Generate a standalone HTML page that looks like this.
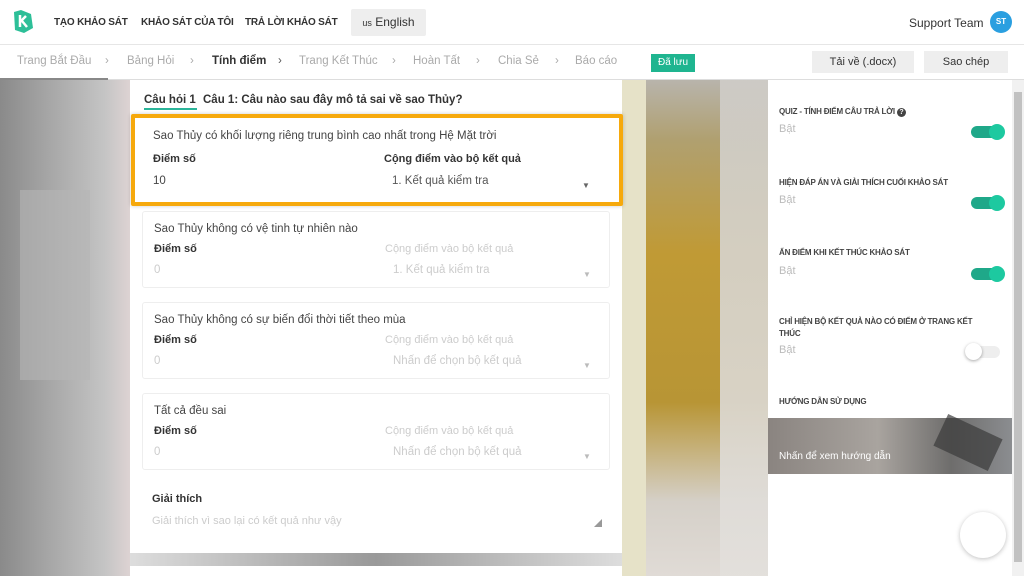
<!DOCTYPE html>
<html><head><meta charset="utf-8"><style>
*{box-sizing:border-box;margin:0;padding:0}
body{width:1024px;height:576px;overflow:hidden;font-family:"Liberation Sans","Noto Sans CJK SC",sans-serif;background:#fff;position:relative;color:#333}
.top{position:absolute;left:0;top:0;width:1024px;height:45px;background:#fff;border-bottom:1px solid #e6e6e6}
.nav{position:absolute;top:17px;font-size:10px;font-weight:bold;color:#333;letter-spacing:-0.2px}
.crumbs{position:absolute;left:0;top:45px;width:1024px;height:35px;background:#fff;border-bottom:1px solid #ddd}
.cr{position:absolute;top:10px;font-size:11.5px;color:#aaa}
.btn{position:absolute;top:6px;height:22px;background:#eee;font-size:11px;color:#333;text-align:center;line-height:22px}
.bg{position:absolute;top:80px;height:496px}
.card{position:absolute;left:130px;top:80px;width:492px;height:473px;background:#fff;border-radius:3px}
.opt{position:absolute;left:142px;width:468px;height:77px;border:1px solid #eee;border-radius:3px;background:#fff}
.opt .t{position:absolute;left:11px;top:11px;font-size:11.5px;color:#444}
.opt .l1{position:absolute;left:11px;top:31px;font-size:11px;font-weight:bold;color:#333}
.opt .l2{position:absolute;left:242px;top:31px;font-size:11px;color:#ccc}
.opt .v1{position:absolute;left:11px;top:52px;font-size:11.5px;color:#ccc}
.opt .v2{position:absolute;left:250px;top:52px;font-size:11.5px;color:#ccc}
.opt .ar{position:absolute;left:440px;top:58px;font-size:8px;color:#bbb}
.rp{position:absolute;left:768px;top:80px;width:244px;height:496px;background:#fff}
.rh{position:absolute;left:11px;font-size:8px;font-weight:bold;color:#444;line-height:12px;letter-spacing:-0.2px}
.rb{position:absolute;left:11px;font-size:11px;color:#bbb}
.tg{position:absolute;left:203px;width:32px;height:12px;border-radius:6px;background:#1fa889}
.tg::after{content:"";position:absolute;right:-2px;top:-2px;width:16px;height:16px;border-radius:50%;background:#1dc9a0}
</style></head><body>
<div class="bg" style="left:0;width:130px;background:linear-gradient(90deg,#8a8a8a 0%,#a8a8a8 40%,#c4c4c4 80%,#ddd3d3 100%)"></div>
<div class="bg" style="left:20px;top:190px;width:70px;height:190px;background:#b5b5b5;opacity:.6"></div>
<div class="bg" style="left:622px;width:146px;background:linear-gradient(180deg,#b8b4ac 0%,#b0a070 12%,#c09a35 35%,#b89535 65%,#d5d0c8 85%,#e0dbd6 100%)"></div>
<div class="bg" style="left:622px;width:24px;background:#e6e2c8"></div>
<div class="bg" style="left:720px;top:80px;width:48px;height:496px;background:linear-gradient(180deg,#cfcdc8,#e3e0dc);opacity:.9"></div>
<div class="bg" style="left:130px;top:553px;width:492px;height:23px;background:linear-gradient(90deg,#ddd,#999,#ddd)"></div>
<div style="position:absolute;left:130px;top:566px;width:492px;height:10px;background:#fff"></div>

<div class="top">
<svg style="position:absolute;left:12px;top:10px" width="21" height="23" viewBox="0 0 21 23"><path d="M2 2 L9 0 L19 4 L21 18 L12 23 L3 20 Z" fill="#2dbf98"/><path d="M8 5 V17 M8 12 L14 6 M10 11 L15 17" stroke="#fff" stroke-width="2.5" fill="none"/></svg>
<div class="nav" style="left:54px">TẠO KHẢO SÁT</div>
<div class="nav" style="left:141px">KHẢO SÁT CỦA TÔI</div>
<div class="nav" style="left:245px">TRẢ LỜI KHẢO SÁT</div>
<div style="position:absolute;left:351px;top:9px;width:75px;height:27px;background:#eee;border-radius:2px;font-size:12px;line-height:27px;text-align:center;color:#333"><span style="font-size:9px">us</span> English</div>
<div style="position:absolute;left:909px;top:16px;font-size:12px;color:#333">Support Team</div>
<div style="position:absolute;left:990px;top:11px;width:22px;height:22px;border-radius:50%;background:#2a9fe0;color:#fff;font-size:8px;font-weight:bold;text-align:center;line-height:22px">ST</div>
</div>
<div class="crumbs">
<div class="cr" style="left:17px">Trang Bắt Đầu</div><div class="cr" style="left:105px">›</div>
<div class="cr" style="left:127px">Bảng Hỏi</div><div class="cr" style="left:190px">›</div>
<div class="cr" style="left:212px;color:#333;font-weight:bold">Tính điểm</div><div class="cr" style="left:278px;color:#555">›</div>
<div class="cr" style="left:299px">Trang Kết Thúc</div><div class="cr" style="left:392px">›</div>
<div class="cr" style="left:413px">Hoàn Tất</div><div class="cr" style="left:476px">›</div>
<div class="cr" style="left:498px">Chia Sẻ</div><div class="cr" style="left:555px">›</div>
<div class="cr" style="left:575px">Báo cáo</div>
<div style="position:absolute;left:651px;top:9px;width:44px;height:18px;background:#1fb590;color:#fff;font-size:10px;text-align:center;line-height:18px">Đã lưu</div>
<div class="btn" style="left:812px;width:102px">Tải về (.docx)</div>
<div class="btn" style="left:924px;width:84px">Sao chép</div>
<div style="position:absolute;left:0;bottom:-1px;width:108px;height:2px;background:#888"></div>
</div>

<div class="card">
<div style="position:absolute;left:14px;top:14px;font-size:11.5px;font-weight:bold;color:#333">Câu hỏi 1</div>
<div style="position:absolute;left:14px;top:28px;width:53px;height:2px;background:#2bb59a"></div>
<div style="position:absolute;left:73px;top:14px;font-size:11.5px;font-weight:bold;color:#333">Câu 1: Câu nào sau đây mô tả sai về sao Thủy?</div>
<div style="position:absolute;left:22px;top:413px;font-size:11px;font-weight:bold">Giải thích</div>
<div style="position:absolute;left:22px;top:435px;font-size:11px;color:#ccc">Giải thích vì sao lại có kết quả như vậy</div>
<div style="position:absolute;left:464px;top:438px;font-size:8px;color:#999">◢</div>
</div>
<div style="position:absolute;left:131px;top:114px;width:492px;height:92px;border:4px solid #f6a90c;border-radius:2px;box-shadow:0 0 4px rgba(0,0,0,.2)"></div>
<div class="opt" style="top:119px;height:81px;border:none"><div class="t">Sao Thủy có khối lượng riêng trung bình cao nhất trong Hệ Mặt trời</div><div class="l1" style="top:34px">Điểm số</div><div class="l2" style="top:34px;color:#333;font-weight:bold">Cộng điểm vào bộ kết quả</div><div class="v1" style="top:56px;color:#444">10</div><div class="v2" style="top:56px;color:#555">1. Kết quả kiểm tra</div><div class="ar" style="top:62px;color:#666">▼</div></div>
<div class="opt" style="top:211px"><div class="t">Sao Thủy không có vệ tinh tự nhiên nào</div><div class="l1">Điểm số</div><div class="l2">Cộng điểm vào bộ kết quả</div><div class="v1">0</div><div class="v2">1. Kết quả kiểm tra</div><div class="ar">▼</div></div>
<div class="opt" style="top:302px"><div class="t">Sao Thủy không có sự biến đổi thời tiết theo mùa</div><div class="l1">Điểm số</div><div class="l2">Cộng điểm vào bộ kết quả</div><div class="v1">0</div><div class="v2">Nhấn để chọn bộ kết quả</div><div class="ar">▼</div></div>
<div class="opt" style="top:393px"><div class="t">Tất cả đều sai</div><div class="l1">Điểm số</div><div class="l2">Cộng điểm vào bộ kết quả</div><div class="v1">0</div><div class="v2">Nhấn để chọn bộ kết quả</div><div class="ar">▼</div></div>

<div class="rp">
<div class="rh" style="top:26px">QUIZ - TÍNH ĐIỂM CÂU TRẢ LỜI <span style="display:inline-block;width:9px;height:9px;border-radius:50%;background:#444;color:#fff;font-size:7px;text-align:center;line-height:9px">?</span></div>
<div class="rb" style="top:43px">Bật</div><div class="tg" style="top:46px"></div>
<div class="rh" style="top:97px">HIỆN ĐÁP ÁN VÀ GIẢI THÍCH CUỐI KHẢO SÁT</div>
<div class="rb" style="top:114px">Bật</div><div class="tg" style="top:117px"></div>
<div class="rh" style="top:167px">ẨN ĐIỂM KHI KẾT THÚC KHẢO SÁT</div>
<div class="rb" style="top:185px">Bật</div><div class="tg" style="top:188px"></div>
<div class="rh" style="top:236px;width:210px">CHỈ HIỆN BỘ KẾT QUẢ NÀO CÓ ĐIỂM Ở TRANG KẾT THÚC</div>
<div class="rb" style="top:264px">Bật</div>
<div style="position:absolute;left:200px;top:266px;width:32px;height:12px;border-radius:6px;background:#eee"></div>
<div style="position:absolute;left:197px;top:263px;width:17px;height:17px;border-radius:50%;background:#fff;box-shadow:0 1px 3px rgba(0,0,0,.35)"></div>
<div class="rh" style="top:316px">HƯỚNG DẪN SỬ DỤNG</div>
<div style="position:absolute;left:0;top:338px;width:244px;height:56px;background:linear-gradient(90deg,#8a8480,#a9a49f 45%,#6e6d6c 75%,#8b8d90)"></div>
<div style="position:absolute;left:170px;top:345px;width:60px;height:35px;background:#3a3a3a;transform:rotate(25deg);opacity:.7"></div>
<div style="position:absolute;left:11px;top:371px;font-size:10px;color:#fff">Nhấn để xem hướng dẫn</div>
<div style="position:absolute;left:192px;top:432px;width:46px;height:46px;border-radius:50%;background:#fff;box-shadow:0 1px 5px rgba(0,0,0,.25)"></div>
</div>
<div style="position:absolute;left:1012px;top:80px;width:12px;height:496px;background:#f1f1f1"><div style="position:absolute;left:2px;top:12px;width:8px;height:470px;background:#c1c1c1"></div></div>
</body></html>
